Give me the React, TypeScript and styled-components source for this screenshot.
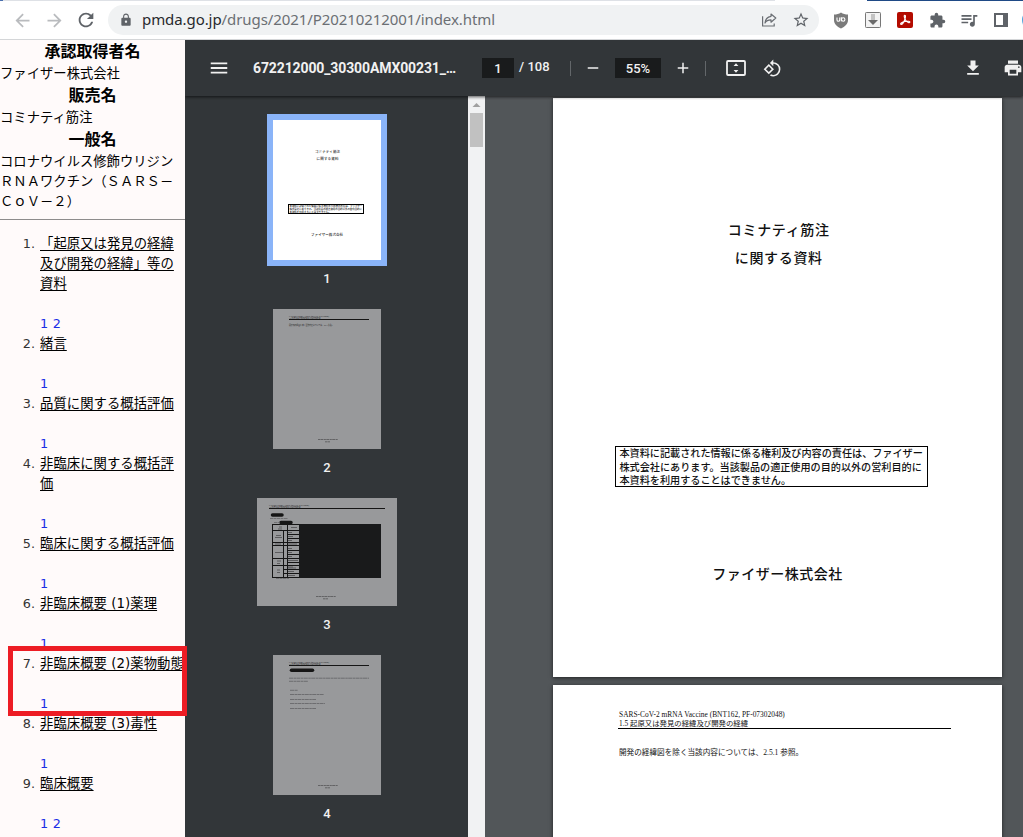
import React from 'react';
import styled, { createGlobalStyle, css } from 'styled-components';
import {
  MdAdd, MdArrowBack, MdArrowForward, MdExtension, MdFileDownload, MdLock, MdMenu,
  MdPrint, MdQueueMusic, MdRefresh, MdRemove, MdRotate90DegreesCcw, MdStarBorder,
} from 'react-icons/md';

const GlobalStyle = createGlobalStyle`
  * { box-sizing: border-box; }
  html, body { margin: 0; padding: 0; overflow: hidden; }
  body { font-family: "DejaVu Sans", "Noto Sans CJK JP", sans-serif; color: #000; }
  svg { display: block; flex: none; }
`;

const Window = styled.div`
  width: 1023px;
  height: 837px;
  display: flex;
  flex-direction: column;
  overflow: hidden;
  background: #fff;
`;

/* Browser chrome */
const TabStrip = styled.div`
  height: 1px;
  flex: none;
  background: linear-gradient(90deg, #4a6fae 0 3px, #dee1e6 3px 775px, #fff 775px 867px, #1f4a86 867px);
`;
const BrowserBar = styled.header`
  height: 39px;
  flex: none;
  display: flex;
  align-items: center;
  padding-left: 6px;
  border-bottom: 1px solid #d4d6d8;
  background: #fff;
`;
const IconSlot = styled.span<{ $color?: string; $width?: number }>`
  width: ${p => p.$width ?? 32}px;
  height: 32px;
  flex: none;
  display: flex;
  align-items: center;
  justify-content: center;
  color: ${p => p.$color ?? '#5f6368'};
`;
const Omnibox = styled.div`
  width: 711px;
  height: 30px;
  margin-left: 6px;
  margin-right: 6px;
  flex: none;
  display: flex;
  align-items: center;
  padding: 0 2px 0 10px;
  border-radius: 15px;
  background: #f0f2f3;
`;
const Url = styled.span`
  flex: 1;
  margin-left: 8px;
  font: 15px/28px "Noto Sans", sans-serif;
  height: 30px;
  letter-spacing: -0.08px;
  white-space: nowrap;
  color: #6b6f74;
  b { font-weight: 400; color: #27292d; }
`;
const Avatar = styled.span`
  width: 20px;
  height: 20px;
  margin-left: 5px;
  flex: none;
  border-radius: 50%;
  background: #4da3dc;
`;

/* Content frames */
const Frames = styled.div`
  flex: 1;
  display: flex;
  min-height: 0;
`;
const IndexFrame = styled.aside`
  position: relative;
  width: 185px;
  flex: none;
  background: #fffafa;
  font-size: 13.33px;
  line-height: 20px;
`;
const FieldName = styled.h2`
  margin: 0;
  height: 24px;
  font: 700 16px/22px "Noto Sans CJK JP", sans-serif;
  text-align: center;
  &:first-child { height: 23px; line-height: 20px; }
`;
const FieldValue = styled.p`
  margin: 0;
  white-space: nowrap;
  font-family: "Noto Sans CJK JP", sans-serif;
`;
const Rule = styled.hr`
  margin: 8px 0 14px;
  border: 0;
  border-top: 1px solid #8e8c8c;
`;
const Toc = styled.ol`
  margin: 0;
  padding: 0;
  list-style: none;
  overflow: hidden;
`;
const TocItem = styled.li`
  display: grid;
  grid-template-columns: 35px auto;
  column-gap: 5px;
  white-space: nowrap;
`;
const TocNumber = styled.span`
  text-align: right;
  font-size: 12.8px;
  color: #333;
`;
const TocTitle = styled.div`
  margin-bottom: 20px;
  letter-spacing: 0.06px;
  text-decoration: underline;
  text-underline-offset: 2px;
`;
const Parts = styled.div`
  grid-column: 2;
  display: flex;
  gap: 4.5px;
  font-size: 12.8px;
  color: #1a2ee6;
`;
const Highlight = styled.div`
  position: absolute;
  z-index: 3;
  left: 8px;
  top: 606px;
  width: 179px;
  height: 70px;
  border: 5px solid #ed1c24;
`;

/* PDF viewer */
const PdfFrame = styled.main`
  flex: 1;
  min-width: 0;
  display: flex;
  flex-direction: column;
  font-family: Roboto, sans-serif;
  color: #f1f1f1;
`;
const PdfBar = styled.div`
  position: relative;
  z-index: 2;
  height: 56px;
  flex: none;
  display: flex;
  align-items: center;
  padding-left: 18px;
  background: #323639;
  box-shadow: 0 1px 3px rgba(0, 0, 0, 0.65);
  clip-path: inset(0 0 -4px 0);
`;
const DocTitle = styled.span`
  width: 247px;
  padding-left: 18px;
  flex: none;
  font-size: 14px;
  font-weight: 700;
  letter-spacing: -0.12px;
  white-space: nowrap;
`;
const Field = styled.span<{ $width: number }>`
  width: ${p => p.$width}px;
  height: 20px;
  flex: none;
  background: #191b1c;
  font-size: 13px;
  font-weight: 500;
  line-height: 21px;
  text-align: center;
`;
const PageCount = styled.span`
  width: 56px;
  padding-left: 5px;
  flex: none;
  font-size: 13px;
  font-weight: 500;
  line-height: 18px;
  height: 20px;
  letter-spacing: 0.05px;
`;
const Divider = styled.span`
  width: 1px;
  height: 15px;
  flex: none;
  background: #63676a;
`;
const ViewTools = styled.div`
  flex: 1;
  display: flex;
  padding-left: 12px;
`;
const FileTools = styled.div`
  flex: none;
  display: flex;
  margin-right: -10px;
`;
const PdfBody = styled.div`
  flex: 1;
  min-height: 0;
  display: flex;
`;
const Thumbs = styled.nav`
  width: 283px;
  flex: none;
  display: flex;
  flex-direction: column;
  align-items: center;
  padding: 18px 0 0 1px;
  background: #323639;
  overflow: hidden;
`;
const ThumbFrame = styled.div<{ $active?: boolean }>`
  flex: none;
  border: 6px solid ${p => (p.$active ? '#8ab4f8' : 'transparent')};
  svg { background: ${p => (p.$active ? '#fff' : '#98999b')}; }
`;
const ThumbLabel = styled.span`
  height: 26px;
  margin-bottom: 11px;
  flex: none;
  font-size: 13px;
  font-weight: 500;
  line-height: 26px;
`;
const ScrollTrack = styled.div`
  width: 17px;
  flex: none;
  display: flex;
  flex-direction: column;
  align-items: center;
  background: #f1f2f3;
`;
const ScrollThumb = styled.div`
  width: 13px;
  height: 34px;
  background: #c1c1c1;
`;
const Pages = styled.section`
  flex: 1;
  min-width: 0;
  padding: 2px 0 0 68px;
  background: #525659;
  overflow: hidden;
`;
const Sheet = styled.article<{ $top: number }>`
  width: 449px;
  height: 579px;
  margin-bottom: 8px;
  padding-top: ${p => p.$top}px;
  background: #fff;
  color: #111;
  box-shadow: 0 1px 4px rgba(0, 0, 0, 0.6);
  font-family: "Noto Sans CJK JP", sans-serif;
`;
const CoverLine = styled.p<{ $track: number; $shift?: number }>`
  margin: 0;
  height: 28px;
  padding-left: ${p => p.$shift ?? 3}px;
  font-size: 14px;
  font-weight: 500;
  line-height: 28px;
  letter-spacing: ${p => p.$track}px;
  text-align: center;
`;
const Notice = styled.div`
  width: 313px;
  height: 41px;
  margin: 175px 0 72px 62px;
  padding-left: 3.5px;
  border: 1px solid #000;
  font-size: 10.12px;
  font-weight: 500;
  line-height: 13.2px;
  white-space: nowrap;
  div { height: 13.2px; }
  div:first-child { line-height: 12.6px; }
`;
const serif = css`font-family: "Liberation Serif", "Noto Sans CJK JP", serif;`;
const RunningHead = styled.div`
  ${serif}
  width: 333px;
  height: 20px;
  margin-left: 65px;
  padding: 1px 0 0 1px;
  border-bottom: 1px solid #000;
  font-size: 7.38px;
  line-height: 9px;
  white-space: nowrap;
  p { margin: 0; }
  p:first-child { letter-spacing: 0.03px; }
`;
const Paragraph = styled.p`
  ${serif}
  margin: 18px 0 0 66px;
  font-size: 7.62px;
  line-height: 12px;
`;
const Mini = styled.text<{ $bold?: boolean }>`
  font-family: "Liberation Serif", "Noto Sans CJK JP", serif;
  font-weight: ${p => (p.$bold ? 500 : 400)};
  fill: #222;
`;

const toc: { title: string[]; parts: number }[] = [
  { title: ['「起原又は発見の経緯', '及び開発の経緯」等の', '資料'], parts: 2 },
  { title: ['緒言'], parts: 1 },
  { title: ['品質に関する概括評価'], parts: 1 },
  { title: ['非臨床に関する概括評', '価'], parts: 1 },
  { title: ['臨床に関する概括評価'], parts: 1 },
  { title: ['非臨床概要 (1)薬理'], parts: 1 },
  { title: ['非臨床概要 (2)薬物動態'], parts: 1 },
  { title: ['非臨床概要 (3)毒性'], parts: 1 },
  { title: ['臨床概要'], parts: 2 },
];

const notice = [
  '本資料に記載された情報に係る権利及び内容の責任は、ファイザー',
  '株式会社にあります。当該製品の適正使用の目的以外の営利目的に',
  '本資料を利用することはできません。',
];
const head = ['SARS-CoV-2 mRNA Vaccine (BNT162, PF-07302048)', '1.5 起原又は発見の経緯及び開発の経緯'];
const body = '開発の経緯図を除く当該内容については、2.5.1 参照。';

const ShareIcon = () => (
  <svg width="16" height="16" viewBox="0 0 16 16" fill="none" stroke="#6a6e73" strokeWidth="1.2">
    <path d="M1.6 4.2V14h11.6v-2.4" />
    <path d="M10 2l4.8 4L10 10.2V7.9C7 7.9 5.200 8.800 4 11c.3-3.800 2.300-6.200 6-6.700z" strokeLinejoin="round" />
  </svg>
);
const ShieldIcon = () => (
  <svg width="16" height="17" viewBox="0 0 16 17">
    <path d="M8 .5C6 1.900 3.500 2.500 1 2.500V8c0 4 3 6.800 7 8.500 4-1.700 7-4.500 7-8.500V2.500C12.500 2.500 10 1.900 8 .5z" fill="#7b7b7b" />
    <path d="M4 5.600v2.300a1.300 1.300 0 0 0 2.700 0V5.600M8.300 9.300V5.200" fill="none" stroke="#fff" strokeWidth="1.100" />
    <circle cx="10.200" cy="7.500" r="1.700" fill="none" stroke="#fff" strokeWidth="1.100" />
  </svg>
);
const SaveIcon = () => (
  <svg width="16" height="16" viewBox="0 0 16 16">
    <rect x=".5" y=".5" width="15" height="15" rx=".8" fill="#f3f3f3" stroke="#777" />
    <path d="M6 2h4v6H6z" fill="#c3c3c3" />
    <path d="M3 8h10l-5 5z" fill="#6b6b6b" />
  </svg>
);
const AcrobatIcon = () => (
  <svg width="16" height="16" viewBox="0 0 16 16">
    <rect width="16" height="16" rx="2" fill="#b30b00" />
    <path d="M7.700 3.200c1.200 0 .8 2.400.1 4.300-.8 2.200-2.500 5-3.700 4.900-1.500-.3.600-2.400 4-3 2.800-.5 5-.1 4.800.8-.3 1.100-2.700.2-4-1.700C7.500 6.700 6.600 3.200 7.700 3.200z" fill="none" stroke="#fff" strokeWidth="1.100" />
  </svg>
);
const SidePanelIcon = () => (
  <svg width="14" height="14" viewBox="0 0 14 14">
    <path d="M0 0h14v14H0zM2 2v10h7V2z" fill="#5f6368" fillRule="evenodd" />
  </svg>
);
const FitPageIcon = () => (
  <svg width="20" height="16" viewBox="0 0 20 16">
    <rect x="1" y="1" width="18" height="14" rx="1" fill="none" stroke="#f1f1f1" strokeWidth="1.800" />
    <path d="M10 3.200l2.400 2.900H7.600zM10 12.800l2.400-2.900H7.600z" fill="#f1f1f1" />
  </svg>
);

const CoverThumb = () => (
  <svg width="108" height="140" viewBox="0 0 108 140">
    <Mini $bold x="42" y="33" fontSize="3.5" textLength="25">コミナティ筋注</Mini>
    <Mini $bold x="43.500" y="40" fontSize="3.5" textLength="22">に関する資料</Mini>
    <rect x="15.500" y="84.500" width="75" height="9" fill="none" stroke="#000" />
    {notice.map((t, i) => (
      <Mini key={t} $bold x="16.500" y={87.300 + i * 2.900} fontSize="2.430">{t}</Mini>
    ))}
    <Mini $bold x="38" y="116" fontSize="3.5" textLength="32">ファイザー株式会社</Mini>
  </svg>
);
const ThumbHead = ({ x, width }: { x: number; width: number }) => (
  <>
    <Mini x={x} y="8" fontSize="1.800">{head[0]}</Mini>
    <Mini x={x} y="10" fontSize="1.800">{head[1]}</Mini>
    <path d={`M${x} 10.500h${width}`} stroke="#151515" />
  </>
);
const ThumbFoot = ({ x, y }: { x: number; y: number }) => (
  <g stroke="#4c4c4e" strokeWidth=".7" strokeDasharray="2 .4 3 .5">
    <path d={`M${x - 10} ${y}h20`} />
    <path d={`M${x - 3} ${y + 2.300}h5`} />
  </g>
);
const TextThumb = () => (
  <svg width="108" height="140" viewBox="0 0 108 140">
    <ThumbHead x={16} width={80} />
    <Mini x="16" y="17" fontSize="1.850">{body}</Mini>
    <ThumbFoot x={55} y={130.500} />
  </svg>
);
const TableThumb = () => (
  <svg width="140" height="108" viewBox="0 0 140 108">
    <ThumbHead x={12} width={116} />
    <path d="M15.500 17h9.500M24 24.500h10" stroke="#151515" strokeWidth="3.500" strokeLinecap="round" />
    <path d="M13 20.500h18M17 24.500h6M19 80.500h13" stroke="#606062" strokeWidth=".7" strokeDasharray="3 .5" />
    <rect x="42" y="26" width="82" height="54" fill="#191a1b" />
    <path d="M15.500 26.500H42M15.500 32.500H42M15.500 44.500H42M15.500 47.500H42M15.500 60.500H42M15.500 67.500H42M15.500 79.500H42M15.500 26v54M26.500 32v48M30.500 26v54M30 36.500h12M30 40.500h12M30 52.500h12M30 56.500h12M30 64.500h12M27 71.500h15M27 75.500h15" fill="none" stroke="#151515" />
    <path d="M22 29h3M21 31h4M34 29.500h6M19 37.500h5M18 39.500h7M18 46h6M18 54.500h8M20 63h4M20 65.500h3M20 72h3M20 74.500h3M31 34.500h4M31 38.500h5M31 42.500h4M31 46h9M31 50.500h4M31 54.500h4M31 58.500h4M31 62.500h10M31 69h5M31 70h8M31 73.500h6M31 77.500h7" stroke="#4c4c4e" strokeWidth=".8" />
    <ThumbFoot x={69} y={98.500} />
  </svg>
);
const ListThumb = () => (
  <svg width="108" height="140" viewBox="0 0 108 140">
    <ThumbHead x={16} width={80} />
    <path d="M18.500 15.300h21" stroke="#151515" strokeWidth="3.500" strokeLinecap="round" />
    <g stroke="#626264" strokeWidth=".8" strokeDasharray="4 .5 2.500 .4">
      <path d="M16 23.200h80M16 26.300h19M17 35.300h8" />
      <path d="M17 39.500h34M17 44.500h26M17 48.500h35M17 53.500h26" />
    </g>
    <ThumbFoot x={55} y={130.500} />
  </svg>
);

const thumbs = [CoverThumb, TextThumb, TableThumb, ListThumb];

export default function App() {
  return (
    <Window>
      <GlobalStyle />
      <TabStrip />
      <BrowserBar>
        <IconSlot $color="#b9bbbe"><MdArrowBack size={21} /></IconSlot>
        <IconSlot $color="#b9bbbe"><MdArrowForward size={21} /></IconSlot>
        <IconSlot><MdRefresh size={22} /></IconSlot>
        <Omnibox>
          <IconSlot $width={16}><MdLock size={14} /></IconSlot>
          <Url><b>pmda.go.jp</b>/drugs/2021/P20210212001/index.html</Url>
          <IconSlot><ShareIcon /></IconSlot>
          <IconSlot><MdStarBorder size={18} /></IconSlot>
        </Omnibox>
        <IconSlot><ShieldIcon /></IconSlot>
        <IconSlot><SaveIcon /></IconSlot>
        <IconSlot><AcrobatIcon /></IconSlot>
        <IconSlot><MdExtension size={17} /></IconSlot>
        <IconSlot><MdQueueMusic size={20} /></IconSlot>
        <IconSlot><SidePanelIcon /></IconSlot>
        <Avatar />
      </BrowserBar>
      <Frames>
        <IndexFrame>
          <FieldName>承認取得者名</FieldName>
          <FieldValue>ファイザー株式会社</FieldValue>
          <FieldName>販売名</FieldName>
          <FieldValue>コミナティ筋注</FieldValue>
          <FieldName>一般名</FieldName>
          <FieldValue>
            コロナウイルス修飾ウリジン<br />ＲＮＡワクチン（ＳＡＲＳ－<br />ＣｏＶ－２）
          </FieldValue>
          <Rule />
          <Toc>
            {toc.map((item, i) => (
              <TocItem key={i}>
                <TocNumber>{i + 1}.</TocNumber>
                <TocTitle>{item.title.map(line => <div key={line}>{line}</div>)}</TocTitle>
                <Parts>
                  {Array.from({ length: item.parts }, (_, n) => <span key={n}>{n + 1}</span>)}
                </Parts>
              </TocItem>
            ))}
          </Toc>
          <Highlight />
        </IndexFrame>
        <PdfFrame>
          <PdfBar>
            <IconSlot><MdMenu size={22} color="#f1f1f1" /></IconSlot>
            <DocTitle>672212000_30300AMX00231_…</DocTitle>
            <Field $width={32}>1</Field>
            <PageCount>/ 108</PageCount>
            <Divider />
            <IconSlot $color="#f1f1f1" $width={44}><MdRemove size={18} /></IconSlot>
            <Field $width={46}>55%</Field>
            <IconSlot $color="#f1f1f1" $width={44}><MdAdd size={18} /></IconSlot>
            <Divider />
            <ViewTools>
              <IconSlot $color="#f1f1f1" $width={36}><FitPageIcon /></IconSlot>
              <IconSlot $color="#f1f1f1" $width={36}><MdRotate90DegreesCcw size={19} /></IconSlot>
            </ViewTools>
            <FileTools>
              <IconSlot $color="#f1f1f1" $width={40}><MdFileDownload size={20} /></IconSlot>
              <IconSlot $color="#f1f1f1" $width={40}><MdPrint size={20} /></IconSlot>
            </FileTools>
          </PdfBar>
          <PdfBody>
            <Thumbs>
              {thumbs.map((Thumb, i) => (
                <React.Fragment key={i}>
                  <ThumbFrame $active={i === 0}><Thumb /></ThumbFrame>
                  <ThumbLabel>{i + 1}</ThumbLabel>
                </React.Fragment>
              ))}
            </Thumbs>
            <ScrollTrack>
              <svg width="17" height="17" viewBox="0 0 17 17"><path d="M4.500 11h8L8.500 7z" fill="#a0a0a0" /></svg>
              <ScrollThumb />
            </ScrollTrack>
            <Pages>
              <Sheet $top={117}>
                <CoverLine $track={0.68} $shift={2.5}>コミナティ筋注</CoverLine>
                <CoverLine $track={0.68} $shift={2.5}>に関する資料</CoverLine>
                <Notice>{notice.map(line => <div key={line}>{line}</div>)}</Notice>
                <CoverLine $track={0.5} $shift={0}>ファイザー株式会社</CoverLine>
              </Sheet>
              <Sheet $top={24}>
                <RunningHead>{head.map(line => <p key={line}>{line}</p>)}</RunningHead>
                <Paragraph>{body}</Paragraph>
              </Sheet>
            </Pages>
          </PdfBody>
        </PdfFrame>
      </Frames>
    </Window>
  );
}
